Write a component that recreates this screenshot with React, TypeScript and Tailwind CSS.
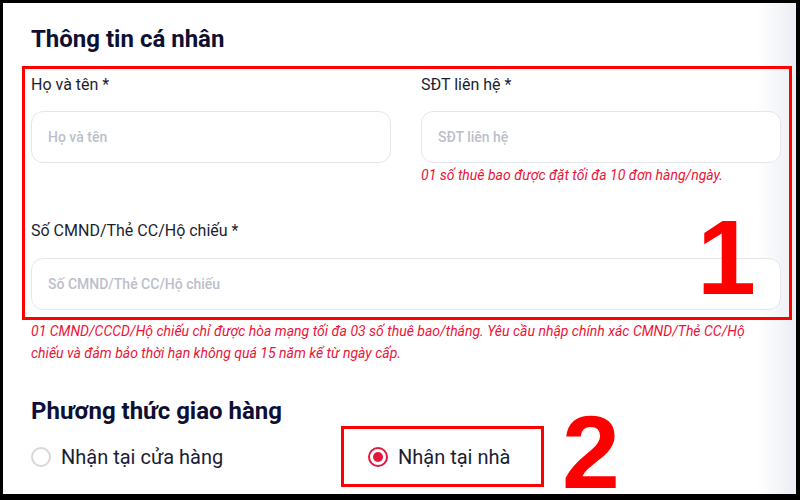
import React from "react";

const Field = ({ label, placeholder, hint }: { label: string; placeholder: string; hint?: string }) => {
  return (
    <div>
      <div className="text-[16px] leading-[24px] text-[#1c1e30]">{label}</div>
      <div className="mt-[14px] h-[52px] rounded-[12px] border border-[#e4e6ea] bg-white flex items-center pl-[16px] text-[14px] font-medium text-[#bcbfca]">
        {placeholder}
      </div>
      {hint && <div className="mt-[2px] text-[14px] leading-[20px] italic text-[#ec1337]">{hint}</div>}
    </div>
  );
};

export default function App() {
  return (
    <div className="relative w-[800px] h-[500px] bg-black pt-[3px] pl-[3px] pr-[4px] pb-[6px] font-['Roboto',sans-serif]">
      <div className="h-full bg-linear-to-r from-white from-[95%] to-[#eceef4] pl-[28px] pt-[20px]">
        <h2 className="text-[24px] leading-[32px] font-bold text-[#0e1033]">Thông tin cá nhân</h2>

        <div className="mt-[11px] -ml-[9px] w-[770px] border-[3px] border-[#ff0000] pl-[6px] pr-[8px] pt-[4px] pb-[7px]">
          <div className="grid grid-cols-2 gap-x-[30px]">
            <Field label="Họ và tên *" placeholder="Họ và tên" />
            <Field label="SĐT liên hệ *" placeholder="SĐT liên hệ" hint="01 số thuê bao được đặt tối đa 10 đơn hàng/ngày." />
          </div>
          <div className="mt-[34px]">
            <div className="text-[16px] leading-[24px] text-[#1c1e30]">Số CMND/Thẻ CC/Hộ chiếu *</div>
            <div className="mt-[15px] h-[52px] rounded-[12px] border border-[#e4e6ea] bg-white flex items-center pl-[16px] text-[14px] font-medium text-[#bcbfca]">
              Số CMND/Thẻ CC/Hộ chiếu
            </div>
          </div>
        </div>

        <p className="w-[735px] text-[14px] leading-[22px] italic text-[#ec1337]">
          01 CMND/CCCD/Hộ chiếu chỉ được hòa mạng tối đa 03 số thuê bao/tháng. Yêu cầu nhập chính xác CMND/Thẻ CC/Hộ chiếu và đảm bảo thời hạn không quá 15 năm kể từ ngày cấp.
        </p>

        <h2 className="mt-[31px] text-[24px] leading-[32px] font-bold text-[#0e1033]">Phương thức giao hàng</h2>

        <div className="mt-[16px] flex items-center">
          <label className="w-[337px] flex items-center gap-[10px]">
            <span className="w-5 h-5 rounded-full border-2 border-[#d8d8d8]"></span>
            <span className="text-[20px] leading-[28px] text-[#1b1d33]">Nhận tại cửa hàng</span>
          </label>
          <label className="flex items-center gap-[10px]">
            <span className="w-5 h-5 rounded-full border-2 border-[#e3173e] flex items-center justify-center">
              <span className="w-[10px] h-[10px] rounded-full bg-[#e3173e]"></span>
            </span>
            <span className="text-[20px] leading-[28px] text-[#1b1d33]">Nhận tại nhà</span>
          </label>
        </div>
      </div>

      {/* annotations */}
      <div className="absolute left-[697px] top-[204px] text-[106px] leading-[106px] font-bold text-[#ff0000] font-['Liberation_Sans',Arial,sans-serif]">1</div>
      <div className="absolute left-[341px] top-[426px] w-[203px] h-[61px] border-[3px] border-[#ff0000]"></div>
      <div className="absolute left-[562px] top-[405px] text-[104px] leading-[94px] font-bold text-[#ff0000] font-['Liberation_Sans',Arial,sans-serif]">2</div>
    </div>
  );
}
